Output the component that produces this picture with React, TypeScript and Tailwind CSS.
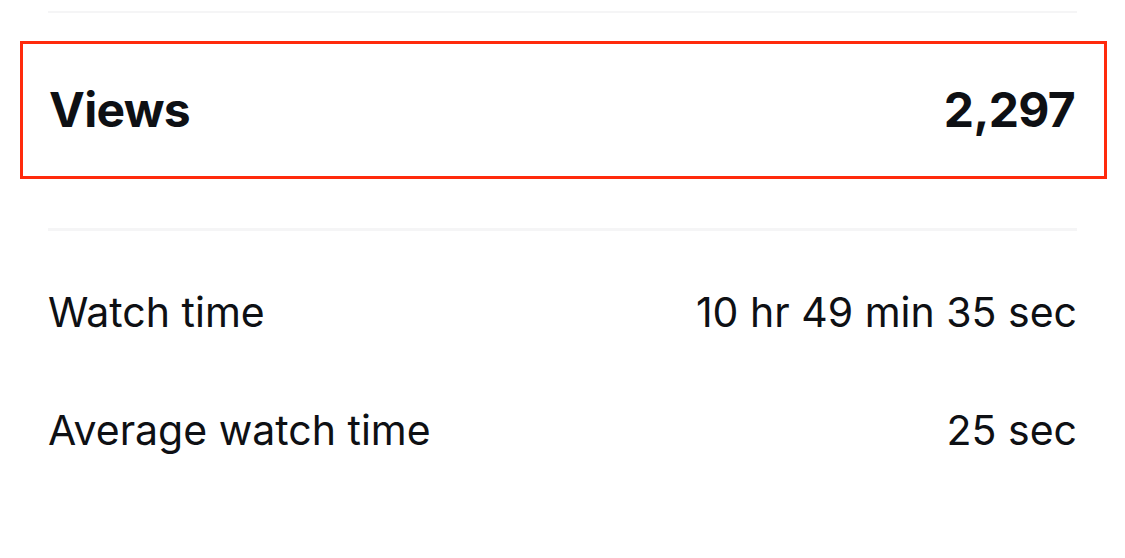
const font = { fontFamily: "Inter, 'Noto Sans', sans-serif" };

type Row = { label: string; value: string };

const rows: Row[] = [
  { label: "Watch time", value: "10 hr 49 min 35 sec" },
  { label: "Average watch time", value: "25 sec" },
];

export default function App() {
  return (
    <div className="w-[1125px] h-[558px] bg-white text-[#0e1014] overflow-hidden" style={font}>
      <div className="px-[48px] pt-[11px]">
        {/* top divider */}
        <div className="h-[2px] bg-[#f5f5f6]" />

        {/* highlighted views row */}
        <div className="mt-[28px] ml-[-28px] mr-[-30px] h-[138px] border-[3px] border-[#ff2a0c] pl-[26px] pr-[29px] flex items-center justify-between">
          <span className="text-[48px] font-bold tracking-[-0.7px]">Views</span>
          <span className="text-[48px] font-bold tracking-[-0.7px]">2,297</span>
        </div>

        {/* divider */}
        <div className="mt-[49px] h-[3px] bg-[#f5f5f6]" />

        <div className="mt-[23px]">
          {rows.map((row) => (
            <div key={row.label} className="h-[118px] flex items-center justify-between">
              <span className="text-[41px]">{row.label}</span>
              <span className="text-[41px]">{row.value}</span>
            </div>
          ))}
        </div>
      </div>
    </div>
  );
}
